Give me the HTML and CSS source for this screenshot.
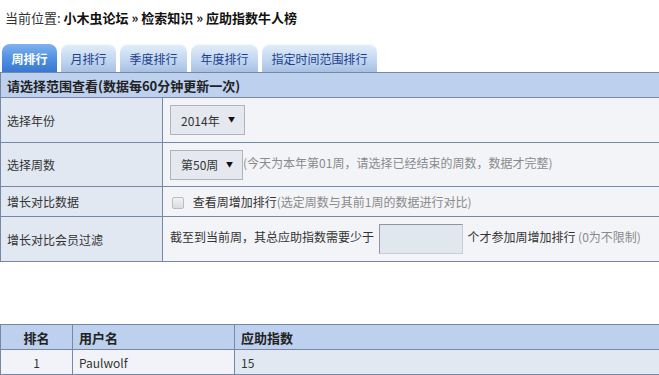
FILE: index.html
```html
<!DOCTYPE html>
<html lang="zh-CN">
<head>
  <meta charset="UTF-8" />
  <title>应助指数牛人榜</title>
  <link rel="stylesheet" href="styles.css">
</head>
<body>

  <!-- breadcrumb -->
  <div class="crumb">
    当前位置: <b>小木虫论坛 » 检索知识 » 应助指数牛人榜</b>
  </div>

  <!-- tabs -->
  <ul class="tabs">
    <li class="tab active">周排行</li>
    <li class="tab">月排行</li>
    <li class="tab">季度排行</li>
    <li class="tab">年度排行</li>
    <li class="tab">指定时间范围排行</li>
  </ul>

  <!-- filter form -->
  <table class="grid form">
    <tr class="head">
      <th colspan="2">请选择范围查看(数据每60分钟更新一次)</th>
    </tr>
    <tr class="tall">
      <td class="label">选择年份</td>
      <td class="value">
        <span class="select wide"><select><option>2014年</option></select></span>
      </td>
    </tr>
    <tr class="tall">
      <td class="label">选择周数</td>
      <td class="value">
        <span class="select"><select><option>第50周</option></select></span><span class="hint">(今天为本年第01周，请选择已经结束的周数，数据才完整)</span>
      </td>
    </tr>
    <tr class="short">
      <td class="label">增长对比数据</td>
      <td class="value">
        <label class="check"><input type="checkbox"> 查看周增加排行<span class="hint">(选定周数与其前1周的数据进行对比)</span></label>
      </td>
    </tr>
    <tr class="tall">
      <td class="label">增长对比会员过滤</td>
      <td class="value">
        截至到当前周，其总应助指数需要少于 <input class="num" type="text"> 个才参加周增加排行 <span class="hint">(0为不限制)</span>
      </td>
    </tr>
  </table>

  <!-- ranking -->
  <table class="grid rank">
    <tr class="head">
      <th class="c-rank">排名</th>
      <th class="c-user">用户名</th>
      <th>应助指数</th>
    </tr>
    <tr>
      <td class="c-rank">1</td>
      <td class="c-user">Paulwolf</td>
      <td class="c-score">15</td>
    </tr>
  </table>

</body>
</html>
```

FILE: styles.css
```css
* { box-sizing: border-box; }

html, body {
  margin: 0;
  padding: 0;
  overflow: hidden;
  background: #fff;
  color: #333;
  font-family: "Noto Sans CJK SC", "Noto Sans", sans-serif;
  font-size: 12px;
}

.crumb {
  padding: 8px 5px;
  height: 36px;
  line-height: 20px;
  font-size: 13px;
  color: #333;
}

.crumb b { color: #111; }

/* tabs */
.tabs {
  display: flex;
  gap: 4px;
  margin: 8px 0 0;
  padding: 0 0 0 2px;
  list-style: none;
  height: 28px;
}

.tab {
  height: 28px;
  line-height: 29px;
  padding: 0 9.5px;
  border-radius: 8px 8px 0 0;
  color: #1d3f8f;
  background: linear-gradient(to bottom, #e4eefa, #c3d7f0 55%, #a7c1e4);
  box-shadow: inset 0 1px 0 #f4f8fd;
}

.tab.active {
  color: #fff;
  font-weight: bold;
  background: linear-gradient(to bottom, #7fb2ee, #4d8fe0 55%, #3a78cf);
  box-shadow: none;
}

/* shared grid table, open on the right like the original page */
.grid {
  width: 100%;
  border-collapse: collapse;
  border: 1px solid #7589a7;
  border-right: 0;
}

.grid th,
.grid td {
  border: 1px solid #7589a7;
  padding: 0 6px;
  text-align: left;
  white-space: nowrap;
}

.grid th:last-child,
.grid td:last-child { border-right: 0; }

.grid .head th {
  height: 25px;
  background: #bdd0ee;
  font-size: 13px;
  font-weight: bold;
  color: #222;
}

.form .label {
  width: 162px;
  background: #e1e8f2;
  color: #333;
}

.form .value {
  background: #f3f4f8;
  padding-left: 7px;
  color: #333;
}

.form .tall td { height: 45px; }
.form tr.tall:nth-child(3) td { height: 44px; }
.form .short td { height: 30px; }

.hint { color: #8a8a8a; }

/* fake native select */
.select {
  position: relative;
  display: inline-block;
  vertical-align: middle;
}

.select select {
  appearance: none;
  -webkit-appearance: none;
  width: 73px;
  height: 30px;
  padding: 0 0 0 10px;
  border: 1px solid #acb4bf;
  border-radius: 0;
  background: #e5e9ef;
  color: #333;
  font: inherit;
  font-size: 12px;
}

.select.wide select { width: 75px; }

.select::after {
  content: "▼";
  position: absolute;
  right: 10px;
  top: 9px;
  font-size: 7px;
  color: #111;
  pointer-events: none;
}

.check input {
  appearance: none;
  -webkit-appearance: none;
  width: 12px;
  height: 12px;
  margin: 0 6px 0 2px;
  vertical-align: -2px;
  border: 1px solid #b9bdc5;
  border-radius: 2px;
  background: linear-gradient(to bottom, #f2f2f2, #dcdcdc);
}

.num {
  width: 84px;
  height: 30px;
  margin: 0 2px;
  vertical-align: middle;
  border: 1px solid #c7ced8;
  border-top-color: #8e959e;
  border-left-color: #8e959e;
  background: #e1e7ef;
}

/* ranking */
.rank { margin-top: 62px; }

.rank td { height: 25px; background: #f2f3f8; }

.rank .c-rank { width: 72px; text-align: center; }
.rank .c-user { width: 162px; }
.rank td.c-score { background: #e1e8f2; }
```
